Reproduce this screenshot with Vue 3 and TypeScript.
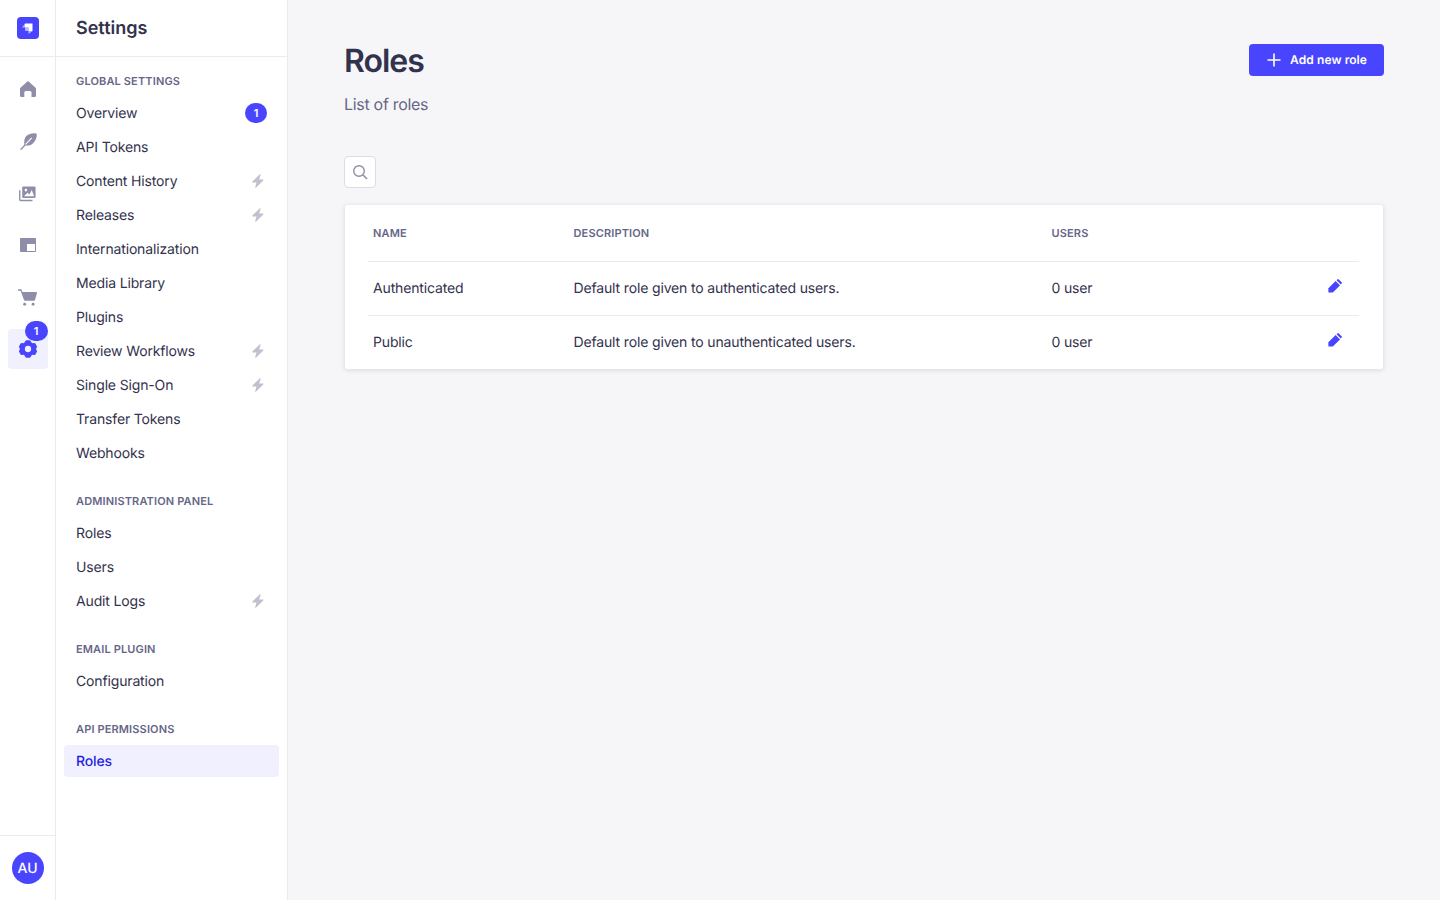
<script setup lang="ts">
interface NavItem {
  label: string
  badge?: number
  locked?: boolean
  active?: boolean
}

interface NavSection {
  title: string
  items: NavItem[]
}

const sections: NavSection[] = [
  {
    title: 'Global settings',
    items: [
      { label: 'Overview', badge: 1 },
      { label: 'API Tokens' },
      { label: 'Content History', locked: true },
      { label: 'Releases', locked: true },
      { label: 'Internationalization' },
      { label: 'Media Library' },
      { label: 'Plugins' },
      { label: 'Review Workflows', locked: true },
      { label: 'Single Sign-On', locked: true },
      { label: 'Transfer Tokens' },
      { label: 'Webhooks' },
    ],
  },
  {
    title: 'Administration panel',
    items: [{ label: 'Roles' }, { label: 'Users' }, { label: 'Audit Logs', locked: true }],
  },
  {
    title: 'Email plugin',
    items: [{ label: 'Configuration' }],
  },
  {
    title: 'API permissions',
    items: [{ label: 'Roles', active: true }],
  },
]

const roles = [
  { name: 'Authenticated', description: 'Default role given to authenticated users.', users: '0 user' },
  { name: 'Public', description: 'Default role given to unauthenticated users.', users: '0 user' },
]
</script>

<template>
  <div class="layout">
    <nav class="rail">
      <div class="rail-head">
        <span class="logo">
          <svg viewBox="0 0 22 22" width="22" height="22">
            <path d="M8 6.500h7.500V14h-4v-3.500H8z" fill="#fff" />
            <path d="M8 6.500v4H5z M11.500 14h4l-4 3z M8 10.500h3.500V14H9a1 1 0 0 1-1-1z" fill="#fff" opacity=".6" />
          </svg>
        </span>
      </div>
      <div class="rail-list">
        <a class="rail-item">
          <svg viewBox="0 0 16 16" width="16" height="16" fill="#8e8ea9">
            <path d="M7.300.500a1 1 0 0 1 1.400 0l6.800 6.300c.3.300.5.700.5 1.100v6.600a1.500 1.500 0 0 1-1.500 1.500h-3v-4.500a1.500 1.500 0 0 0-1.500-1.500H5.800a1.500 1.500 0 0 0-1.500 1.500V16H1.500A1.500 1.500 0 0 1 0 14.500V7.900c0-.4.200-.8.500-1.100z" />
          </svg>
        </a>
        <a class="rail-item feather">
          <svg viewBox="0 0 16 16" width="17" height="17" fill="#8e8ea9">
            <path d="M15.600.600C13-.3 8.700.3 6.200 2.700 4.200 4.700 3.600 7.600 4.200 11.200c2.800 1.300 6.100.6 8.100-1.600C14.800 7 16.400 3 15.600.600z" />
            <path d="M11 4.500 5 11" fill="none" stroke="#fff" stroke-width="1" />
            <path d="M5.200 10.800.6 15.700" fill="none" stroke="#8e8ea9" stroke-width="1.200" />
          </svg>
        </a>
        <a class="rail-item">
          <svg viewBox="0 0 16 16" width="17" height="17" fill="none" stroke="#8e8ea9">
            <path d="M.7 5v8.600a1 1 0 0 0 1 1h11" stroke-width="1.300" />
            <rect x="3" y="1.300" width="12.600" height="11" rx="1" fill="#8e8ea9" stroke="none" />
            <path d="M4.700 10.700 8 7.300l1.800 1.600L12 4.600l2.200 6.100z" fill="#fff" stroke="none" />
            <circle cx="6.500" cy="4.800" r="1.200" fill="#fff" stroke="none" />
          </svg>
        </a>
        <a class="rail-item">
          <svg viewBox="0 0 16 14" width="16" height="14">
            <rect width="16" height="14" rx="1" fill="#8e8ea9" />
            <rect x="7" y="6" width="8" height="7" fill="#fff" />
          </svg>
        </a>
        <a class="rail-item">
          <svg viewBox="0 0 18 16" width="19" height="17" fill="#8e8ea9">
            <path d="M0 .300h2.700c.4 0 .7.200.8.600l.6 2h13.300c.4 0 .7.400.6.800l-1.900 6.700c-.1.400-.4.600-.8.600H6.500c-.4 0-.7-.200-.8-.600L2.400 1.700H0z" />
            <circle cx="6.300" cy="14.300" r="1.400" />
            <circle cx="14.300" cy="14.300" r="1.400" />
          </svg>
        </a>
        <a class="rail-item active">
          <svg viewBox="0 0 16 16" width="18" height="18" fill="#4945ff">
            <path fill-rule="evenodd" d="M5.700.800a1 1 0 0 1 .9-.5h2.800a1 1 0 0 1 .9.500l.8 1.400a5 5 0 0 1 1 .6l1.600-.1a1 1 0 0 1 .9.500l1.300 2.300a1 1 0 0 1 0 1L15.100 8l.8 1.500a1 1 0 0 1 0 1l-1.300 2.300a1 1 0 0 1-.9.500l-1.600-.1a5 5 0 0 1-1 .6l-.8 1.400a1 1 0 0 1-.9.500H6.600a1 1 0 0 1-.9-.5l-.8-1.400a5 5 0 0 1-1-.6l-1.600.1a1 1 0 0 1-.9-.5L.100 10.500a1 1 0 0 1 0-1L.900 8 .1 6.500a1 1 0 0 1 0-1l1.300-2.300a1 1 0 0 1 .9-.5l1.600.1a5 5 0 0 1 1-.6zM8 5.200a2.800 2.800 0 1 0 0 5.600 2.800 2.800 0 0 0 0-5.600z" />
          </svg>
          <span class="rail-badge">1</span>
        </a>
      </div>
      <div class="rail-foot">
        <span class="avatar">AU</span>
      </div>
    </nav>

    <aside class="subnav">
      <h2 class="subnav-title">Settings</h2>
      <div class="subnav-body">
        <section v-for="section in sections" :key="section.title" class="group">
          <h3 class="group-title">{{ section.title }}</h3>
          <ul class="group-list">
            <li
              v-for="item in section.items"
              :key="item.label"
              class="group-item"
              :class="{ current: item.active }"
            >
              <span class="item-label">{{ item.label }}</span>
              <span v-if="item.badge" class="count">{{ item.badge }}</span>
              <svg v-if="item.locked" class="bolt" viewBox="0 0 12 14" width="12" height="14" fill="#c0c0cf">
                <path d="M7.800.300.400 7.600c-.3.300-.1.800.3.800h3.800L3.200 13.300c-.1.500.4.700.7.400l7.400-7.300c.3-.3.100-.8-.3-.8H7.200L8.600.700C8.700.200 8.200 0 7.800.300z" />
              </svg>
            </li>
          </ul>
        </section>
      </div>
    </aside>

    <main class="content">
      <header class="page-head">
        <div>
          <h1 class="page-title">Roles</h1>
          <p class="page-sub">List of roles</p>
        </div>
        <button class="add-btn" type="button">
          <svg viewBox="0 0 14 14" width="14" height="14" fill="none" stroke="#fff" stroke-width="1.600">
            <path d="M7 .5v13M.5 7h13" />
          </svg>
          <span>Add new role</span>
        </button>
      </header>

      <button class="search-btn" type="button" aria-label="Search">
        <svg viewBox="0 0 16 16" width="16" height="16" fill="none" stroke="#8e8ea9">
          <circle cx="7" cy="7" r="5.300" stroke-width="1.400" />
          <path d="m11 11 4 4" stroke-width="1.600" />
        </svg>
      </button>

      <div class="table-card">
        <table class="table">
          <thead>
            <tr>
              <th class="col-name">Name</th>
              <th class="col-desc">Description</th>
              <th class="col-users">Users</th>
              <th class="col-action"></th>
            </tr>
          </thead>
          <tbody>
            <tr v-for="role in roles" :key="role.name">
              <td>{{ role.name }}</td>
              <td>{{ role.description }}</td>
              <td>{{ role.users }}</td>
              <td class="cell-action">
                <svg viewBox="0 0 14 14" width="14" height="14">
                  <path d="M.4 9.200 7.600 2 12 6.400 4.800 13.600H.4z" fill="#4945ff" />
                  <path d="M8.600 1.200 9.400.4a1 1 0 0 1 1.400 0l2.800 2.800a1 1 0 0 1 0 1.400l-.8.800z" fill="#4945ff" />
                </svg>
              </td>
            </tr>
          </tbody>
        </table>
      </div>
    </main>
  </div>
</template>

<style>
body {
  background: #f6f6f9;
}
</style>

<style scoped>
.layout {
  display: flex;
  height: 900px;
  overflow: hidden;
  font-family: Inter, "Liberation Sans", sans-serif;
  text-rendering: geometricPrecision;
  color: #32324d;
  background: #f6f6f9;
}

.rail {
  width: 56px;
  flex-shrink: 0;
  box-sizing: border-box;
  display: flex;
  flex-direction: column;
  background: #fff;
  border-right: 1px solid #eaeaef;
}
.rail-head {
  height: 57px;
  flex-shrink: 0;
  box-sizing: border-box;
  display: flex;
  align-items: center;
  justify-content: center;
  border-bottom: 1px solid #eaeaef;
}
.logo {
  width: 22px;
  height: 22px;
  margin-top: -1px;
  border-radius: 4px;
  background: #4945ff;
  display: block;
}
.logo svg {
  display: block;
}
.rail-list {
  flex: 1;
  display: flex;
  flex-direction: column;
  align-items: center;
  gap: 12px;
  padding-top: 12px;
}
.rail-item {
  width: 40px;
  height: 40px;
  border-radius: 4px;
  display: flex;
  align-items: center;
  justify-content: center;
  position: relative;
}
.rail-item.active {
  background: #f0f0ff;
}
.rail-item.feather svg {
  margin-left: 1px;
}
.rail-badge {
  position: absolute;
  top: -8px;
  right: 0;
  width: 23px;
  height: 20px;
  border-radius: 10px;
  background: #4945ff;
  color: #fff;
  font-size: 11px;
  font-weight: 600;
  display: flex;
  align-items: center;
  justify-content: center;
}
.rail-foot {
  height: 65px;
  flex-shrink: 0;
  box-sizing: border-box;
  border-top: 1px solid #eaeaef;
  display: flex;
  align-items: center;
  justify-content: center;
}
.avatar {
  width: 32px;
  height: 32px;
  border-radius: 50%;
  background: #4945ff;
  color: #fff;
  font-size: 14px;
  font-weight: 500;
  display: flex;
  align-items: center;
  justify-content: center;
}

.subnav {
  width: 232px;
  flex-shrink: 0;
  box-sizing: border-box;
  background: #fff;
  border-right: 1px solid #eaeaef;
}
.subnav-title {
  margin: 0;
  height: 57px;
  box-sizing: border-box;
  padding: 0 20px;
  display: flex;
  align-items: center;
  font-size: 18px;
  font-weight: 600;
  border-bottom: 1px solid #eaeaef;
}
.subnav-body {
  padding: 16px 8px 0;
  display: flex;
  flex-direction: column;
  gap: 24px;
}
.group-title {
  margin: 0 0 8px;
  padding-left: 12px;
  height: 16px;
  line-height: 16px;
  font-size: 11px;
  font-weight: 600;
  letter-spacing: 0.14px;
  text-transform: uppercase;
  color: #666687;
}
.group-list {
  list-style: none;
  margin: 0;
  padding: 0;
  display: flex;
  flex-direction: column;
  gap: 2px;
}
.group-item {
  height: 32px;
  box-sizing: border-box;
  padding: 0 12px;
  border-radius: 4px;
  display: flex;
  align-items: center;
  justify-content: space-between;
  font-size: 14px;
}
.item-label {
  line-height: 20px;
  padding-top: 2px;
  letter-spacing: -0.15px;
}
.group-item.current {
  background: #f0f0ff;
  color: #271fe0;
  font-weight: 500;
}
.count {
  width: 22px;
  height: 20px;
  border-radius: 10px;
  background: #4945ff;
  color: #fff;
  font-size: 11px;
  font-weight: 600;
  display: flex;
  align-items: center;
  justify-content: center;
}
.bolt {
  margin-right: 3.500px;
}

.content {
  flex: 1;
  min-width: 0;
  box-sizing: border-box;
  padding: 40px 56px 0;
}
.page-head {
  display: flex;
  justify-content: space-between;
  align-items: flex-start;
}
.page-title {
  margin: 0;
  padding-top: 1px;
  font-size: 32px;
  line-height: 40px;
  font-weight: 600;
  letter-spacing: -1px;
}
.page-sub {
  margin: 11px 0 0;
  font-size: 16px;
  line-height: 24px;
  letter-spacing: -0.3px;
  color: #666687;
}
.add-btn {
  margin-top: 4px;
  height: 32px;
  box-sizing: border-box;
  padding: 0 17px 1px 18px;
  display: flex;
  align-items: center;
  gap: 9px;
  border: 0;
  border-radius: 4px;
  background: #4945ff;
  color: #fff;
  font: 600 12px Inter, "Liberation Sans", sans-serif;
  letter-spacing: 0.08px;
  text-rendering: geometricPrecision;
}
.add-btn svg {
  margin-top: 1px;
}
.search-btn {
  display: flex;
  align-items: center;
  justify-content: center;
  width: 32px;
  height: 32px;
  padding: 0;
  margin-top: 40px;
  background: #fff;
  border: 1px solid #dcdce4;
  border-radius: 4px;
}
.table-card {
  margin-top: 16px;
  padding: 0 24px 0 23px;
  background: #fff;
  background-clip: padding-box;
  border: 1px solid transparent;
  border-radius: 4px;
  box-shadow: 0 1px 4px rgba(33, 33, 52, 0.1);
}
.table {
  width: 100%;
  border-collapse: collapse;
  table-layout: fixed;
  font-size: 14px;
  letter-spacing: -0.15px;
}
.table th {
  height: 56px;
  box-sizing: border-box;
  padding: 0 0 0 5px;
  text-align: left;
  font-size: 11px;
  font-weight: 600;
  letter-spacing: 0.14px;
  text-transform: uppercase;
  color: #666687;
}
.col-name {
  width: 200.500px;
}
.col-desc {
  width: 478px;
}
.col-users {
  width: 240px;
}
.col-action {
  width: 72.500px;
}
.table td {
  height: 54px;
  box-sizing: border-box;
  padding: 1px 0 0 5px;
  border-top: 1px solid #eaeaef;
}
.table td.cell-action {
  text-align: right;
  padding-right: 17px;
}
.cell-action svg {
  display: inline-block;
  position: relative;
  top: -3.500px;
  vertical-align: middle;
}
</style>
